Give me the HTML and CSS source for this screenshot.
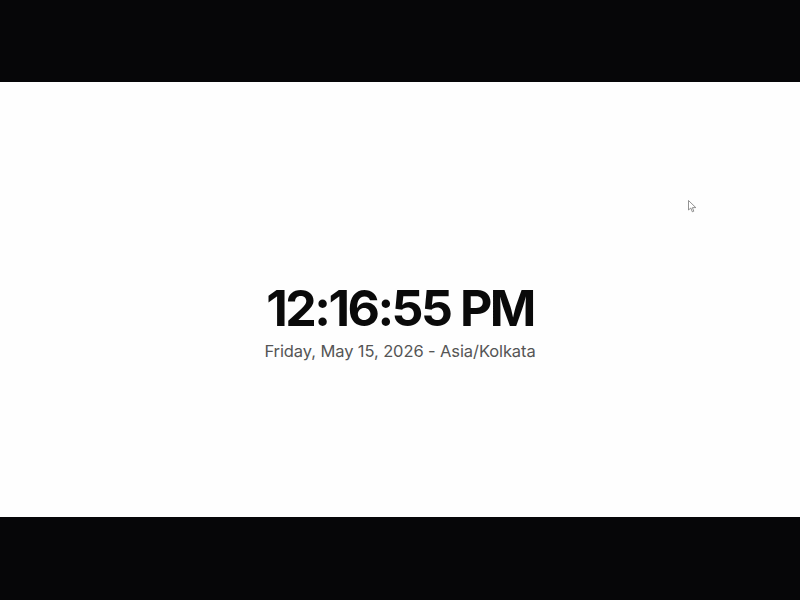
FILE: index.html
```html
<!DOCTYPE html>
<html lang="en">
<head>
    <meta charset="UTF-8">
    <meta name="viewport" content="width=device-width, initial-scale=1.0">
    <title>Clock</title>
    <link rel="stylesheet" href="styles.css">
</head>
<body>
    <div class="bar"></div>
    <main class="stage">
        <div class="clock">
            <div class="time">12:16:55 PM</div>
            <div class="date">Friday, May 15, 2026 - Asia/Kolkata</div>
        </div>
        <!-- mouse pointer -->
        <svg class="pointer" width="9" height="13" viewBox="0 0 9 13">
            <path d="M0.5 0.5 L0.5 10 L2.8 8 L4.3 11.8 L5.8 11.2 L4.4 7.6 L7.8 7.6 Z" fill="#fff" stroke="#777" stroke-width="0.8"/>
        </svg>
    </main>
    <div class="bar"></div>
</body>
</html>
```

FILE: styles.css
```css
body {
    margin: 0;
    padding: 0;
    font-family: Inter, "Noto Sans", sans-serif;
    background-color: #060608;
    height: 600px;
    display: flex;
    flex-direction: column;
}
.bar {
    height: 82px;
    background-color: #060608;
}
.bar:last-child {
    height: 83px;
}
.stage {
    position: relative;
    height: 435px;
    background-color: #fefefe;
    display: flex;
    align-items: center;
    justify-content: center;
}
.clock {
    text-align: center;
    margin-top: 44px;
}
.time {
    font-size: 50px;
    font-weight: 700;
    letter-spacing: -2.5px;
    color: #0a0a0a;
    line-height: 52px;
}
.date {
    font-size: 16.5px;
    color: #555;
    margin-top: 7px;
    letter-spacing: -0.1px;
}
.pointer {
    position: absolute;
    left: 688px;
    top: 118px;
}
```
